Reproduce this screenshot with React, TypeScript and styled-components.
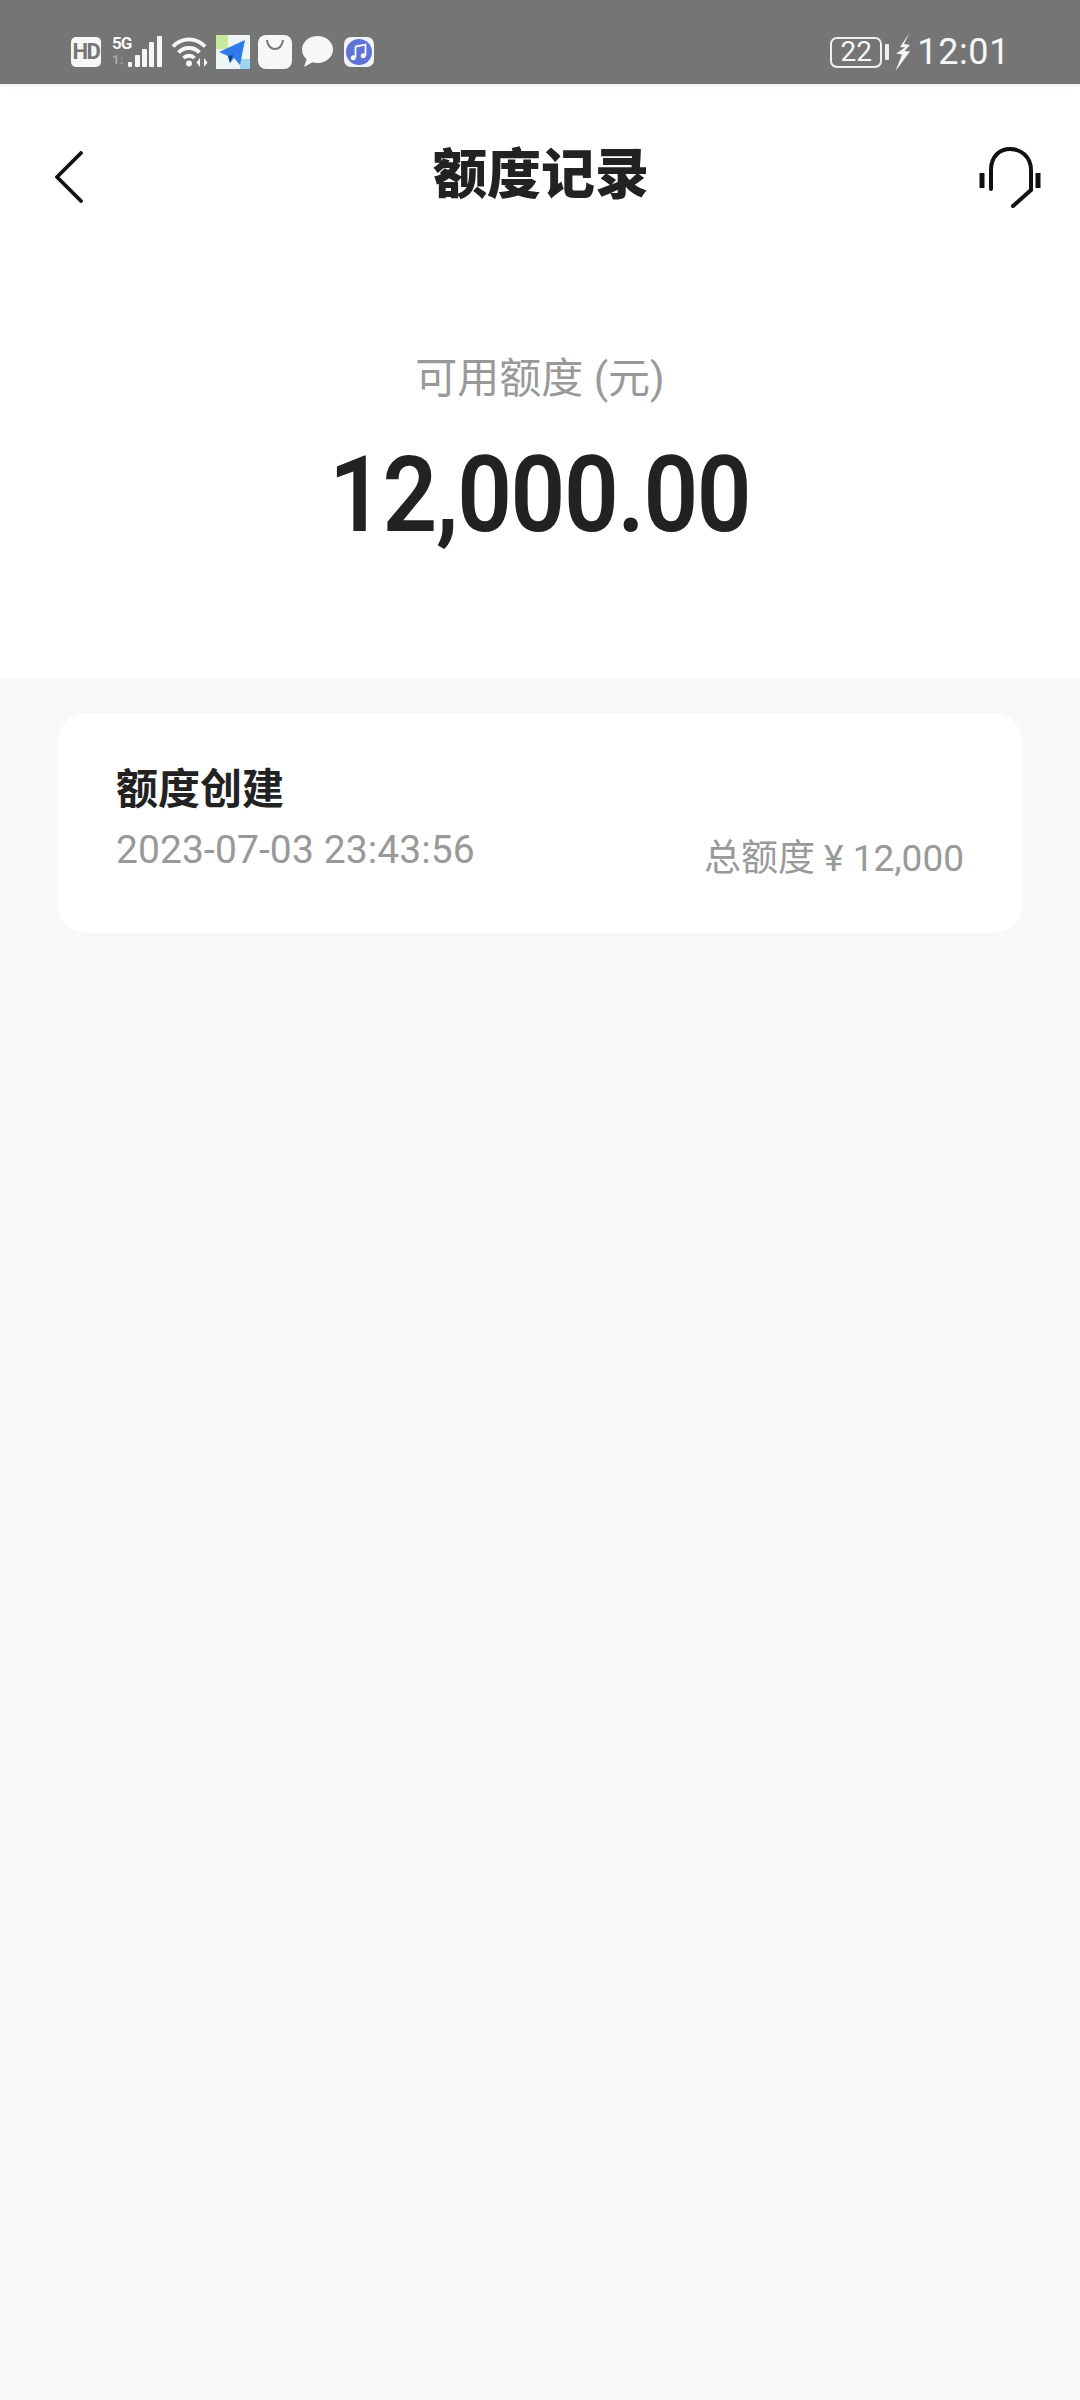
import React from 'react';
import styled, { createGlobalStyle } from 'styled-components';

const textFont = `Roboto, "Noto Sans CJK SC", sans-serif`;
const darkText = '#222222';
const greyText = '#999999';

const GlobalStyle = createGlobalStyle`
  html, body {
    margin: 0;
    padding: 0;
    background: #f8f8f8;
  }
`;

const Page = styled.div`
  width: 1080px;
  height: 2400px;
  display: flex;
  flex-direction: column;
  background: #f8f8f8;
  font-family: ${textFont};
  overflow: hidden;
`;

const StatusBar = styled.div`
  height: 84px;
  flex-shrink: 0;
  display: flex;
  align-items: center;
  justify-content: space-between;
  padding: 20px 70px 0 71px;
  box-sizing: border-box;
  background: #757575;
  color: #f7f7f7;
  box-shadow: 0 2px 4px rgba(0, 0, 0, 0.08);
  position: relative;
`;

const StatusGroup = styled.div`
  display: flex;
  align-items: center;
`;

const HdBadge = styled.span`
  width: 30px;
  height: 30px;
  border-radius: 5px;
  background: #f7f7f7;
  color: #757575;
  font: 700 22px/30px Roboto, sans-serif;
  letter-spacing: -1.5px;
  text-align: center;
`;

const NetworkStack = styled.div`
  width: 18px;
  margin: 0 -2px 0 11px;
  display: flex;
  flex-direction: column;
  font: 700 17px/15px Roboto, sans-serif;
  letter-spacing: -1px;
  height: 32px;
`;

const TrafficMark = styled.span`
  font-size: 13px;
  line-height: 17px;
  color: #a9a9a9;
`;

const BatteryBox = styled.span`
  width: 52px;
  height: 31px;
  box-sizing: border-box;
  border: 2.5px solid #f0f0f0;
  border-radius: 7px;
  font: 400 28px/26px Roboto, sans-serif;
  text-align: center;
`;

const BatteryNub = styled.span`
  width: 4px;
  height: 16px;
  margin-left: 3px;
  background: #f0f0f0;
  border-radius: 1px;
`;

const Clock = styled.span`
  margin-left: 7px;
  font: 400 36px/36px Roboto, sans-serif;
  letter-spacing: 0.6px;
`;

const Summary = styled.section`
  height: 594px;
  flex-shrink: 0;
  background: #ffffff;
  display: flex;
  flex-direction: column;
  align-items: center;
`;

const TitleBar = styled.header`
  width: 100%;
  height: 186px;
  box-sizing: border-box;
  padding: 0 38px 0 55px;
  display: flex;
  align-items: center;
  justify-content: space-between;
`;

const PageTitle = styled.h1`
  margin: 0 0 2px 21px;
  font-size: 54px;
  line-height: 60px;
  font-weight: 900;
  color: ${darkText};
`;

const BalanceLabel = styled.div`
  margin-top: 79px;
  font-size: 42px;
  line-height: 60px;
  color: ${greyText};
`;

const BalanceValue = styled.div`
  margin-top: 26px;
  font-size: 106px;
  line-height: 120px;
  font-weight: 600;
  letter-spacing: -1.5px;
  color: ${darkText};
  transform: scaleX(0.905);
`;

const RecordList = styled.main`
  padding: 35px 58px;
`;

const RecordCard = styled.article`
  height: 220px;
  box-sizing: border-box;
  padding: 49px 58px 0;
  border-radius: 28px;
  background: #ffffff;
`;

const RecordTitle = styled.div`
  font-size: 42px;
  line-height: 56px;
  font-weight: 700;
  color: ${darkText};
`;

const RecordMeta = styled.div`
  display: flex;
  align-items: flex-start;
  justify-content: space-between;
  margin-top: 8px;
  color: ${greyText};
`;

const RecordDate = styled.span`
  font-size: 39px;
  line-height: 48px;
  letter-spacing: 0.1px;
`;

const RecordTotal = styled.span`
  margin-top: 9px;
  font-size: 37px;
  line-height: 48px;
`;

const SignalIcon = () => (
  <svg width="34" height="32" viewBox="0 0 34 32" fill="#f7f7f7">
    <rect x="0" y="26" width="4" height="5" rx="1" />
    <rect x="7" y="19" width="5" height="12" rx="1" />
    <rect x="14" y="13" width="5" height="18" rx="1" />
    <rect x="21" y="6" width="5" height="25" rx="1" />
    <rect x="29" y="0" width="5" height="31" rx="1" />
  </svg>
);

const WifiIcon = () => (
  <svg width="38" height="32" viewBox="0 0 38 32" fill="none" stroke="#f7f7f7" strokeWidth="3.8" style={{ marginLeft: 9 }}>
    <path d="M2 10.5C11 1 25 1 34 10.5" />
    <path d="M7.5 16.5C13 10.5 23 10.5 28.5 16.5" />
    <path d="M12.5 22C15.5 19 20.5 19 23.5 22" />
    <circle cx="18" cy="27.5" r="3" fill="#f7f7f7" stroke="none" />
    <path d="M29 22v9l-3.5-4.5zM33 31v-9l3.5 4.5z" fill="#f7f7f7" stroke="none" />
  </svg>
);

const MapIcon = () => (
  <svg width="34" height="34" viewBox="0 0 34 34" style={{ marginLeft: 7 }}>
    <rect width="34" height="34" fill="#eef5f7" />
    <rect width="12" height="14" fill="#c5e89a" />
    <rect x="24" y="24" width="10" height="10" fill="#9ed6f2" />
    <path d="M29 5L3 17l9 4 2 7 4-5 6 7z" fill="#2f7bea" />
    <path d="M12 21l2 7 3-8z" fill="#14418f" />
  </svg>
);

const BagIcon = () => (
  <svg width="34" height="34" viewBox="0 0 34 34" style={{ marginLeft: 8 }}>
    <rect width="34" height="34" rx="8" fill="#f7f7f7" />
    <path d="M9 5c1 12 15 12 16 0" fill="none" stroke="#777" strokeWidth="2" />
  </svg>
);

const ChatIcon = () => (
  <svg width="32" height="32" viewBox="0 0 32 32" fill="#f7f7f7" style={{ marginLeft: 9 }}>
    <ellipse cx="16.5" cy="13.5" rx="15.5" ry="13.5" />
    <path d="M3 31l3-9 6 4z" />
  </svg>
);

const MusicIcon = () => (
  <svg width="30" height="30" viewBox="0 0 30 30" style={{ marginLeft: 11 }}>
    <rect width="30" height="30" rx="7" fill="#f2f3fa" />
    <circle cx="15" cy="15" r="13" fill="#5f72d6" />
    <path d="M11.5 9.5l10-2v11" fill="none" stroke="#f7f7f7" strokeWidth="1.8" />
    <path d="M11.5 9.5v11" fill="none" stroke="#f7f7f7" strokeWidth="1.8" />
    <circle cx="9.3" cy="20.8" r="2.5" fill="#f7f7f7" />
    <circle cx="19.3" cy="18.8" r="2.5" fill="#f7f7f7" />
  </svg>
);

const BoltIcon = () => (
  <svg width="15" height="38" viewBox="0 0 15 38" fill="#f4f4f4" style={{ marginLeft: 6 }}>
    <path d="M14.5 0L5 14l5 .5L1 20.5l6 1L.5 38 15 18.5l-5.5-.5 5.5-6-6-1z" />
  </svg>
);

const BackIcon = () => (
  <svg width="28" height="52" viewBox="0 0 28 52" fill="none" stroke="#111" strokeWidth="3.8" strokeLinecap="round" strokeLinejoin="round">
    <path d="M26 2L2 26l24 24" />
  </svg>
);

const HeadsetIcon = () => (
  <svg width="64" height="62" viewBox="0 0 64 62" fill="none" stroke="#111" strokeWidth="4">
    <path d="M13 43V24C13 10 22 3 32 3s21 7 21 21v20L35 60" strokeLinecap="round" />
    <path d="M4 27v15M60 27v15" strokeWidth="5" />
  </svg>
);

export default function App() {
  return (
    <Page lang="zh-CN">
      <GlobalStyle />
      <StatusBar>
        <StatusGroup>
          <HdBadge>HD</HdBadge>
          <NetworkStack>
            <span>5G</span>
            <TrafficMark>1↓</TrafficMark>
          </NetworkStack>
          <SignalIcon />
          <WifiIcon />
          <MapIcon />
          <BagIcon />
          <ChatIcon />
          <MusicIcon />
        </StatusGroup>
        <StatusGroup>
          <BatteryBox>22</BatteryBox>
          <BatteryNub />
          <BoltIcon />
          <Clock>12:01</Clock>
        </StatusGroup>
      </StatusBar>
      <Summary>
        <TitleBar>
          <BackIcon />
          <PageTitle>额度记录</PageTitle>
          <HeadsetIcon />
        </TitleBar>
        <BalanceLabel>可用额度 (元)</BalanceLabel>
        <BalanceValue>12,000.00</BalanceValue>
      </Summary>
      <RecordList>
        <RecordCard>
          <RecordTitle>额度创建</RecordTitle>
          <RecordMeta>
            <RecordDate>2023-07-03 23:43:56</RecordDate>
            <RecordTotal>总额度 ¥ 12,000</RecordTotal>
          </RecordMeta>
        </RecordCard>
      </RecordList>
    </Page>
  );
}
